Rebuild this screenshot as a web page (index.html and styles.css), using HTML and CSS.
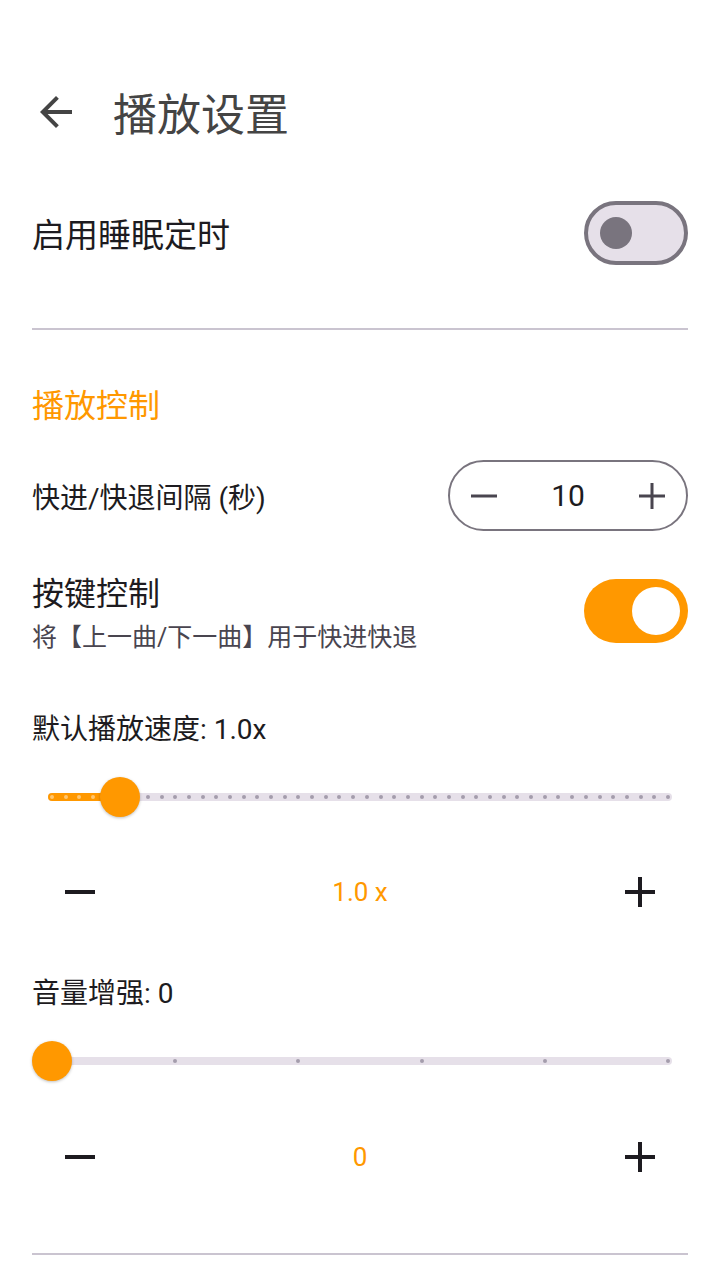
FILE: index.html
```html
<!DOCTYPE html>
<html lang="zh-CN">
<head>
    <meta charset="UTF-8">
    <meta name="viewport" content="width=device-width, initial-scale=1.0">
    <title>播放设置</title>
    <link rel="stylesheet" href="styles.css">
</head>
<body>
    <div class="page">
        <div class="header">
            <svg class="back" viewBox="0 0 24 24"><path d="M20 11H7.83l5.59-5.59L12 4l-8 8 8 8 1.41-1.41L7.83 13H20v-2z"/></svg>
            <h1>播放设置</h1>
        </div>

        <div class="row sleep-row">
            <span class="row-title sleep-title">启用睡眠定时</span>
            <div class="switch"><div class="knob"></div></div>
        </div>

        <div class="divider first"></div>

        <div class="section-title">播放控制</div>

        <div class="row step-row">
            <span class="row-label">快进/快退间隔 (秒)</span>
            <div class="stepper">
                <svg class="step-icon" viewBox="0 0 32 32"><path d="M3 16h26"/></svg>
                <span class="step-value">10</span>
                <svg class="step-icon" viewBox="0 0 32 32"><path d="M3 16h26M16 3v26"/></svg>
            </div>
        </div>

        <div class="row key-row">
            <div class="key-text">
                <div class="row-title">按键控制</div>
                <div class="row-sub">将【上一曲/下一曲】用于快进快退</div>
            </div>
            <div class="switch on"><div class="knob"></div></div>
        </div>

        <div class="slider-label speed-label">默认播放速度: 1.0x</div>
        <div class="slider" data-steps="45" data-value="5">
            <div class="track"><div class="active"></div></div>
            <div class="ticks"></div>
            <div class="thumb"></div>
        </div>
        <div class="adjust">
            <svg class="adj-icon" viewBox="0 0 30 30"><path d="M0 15h30"/></svg>
            <span class="adj-value">1.0 x</span>
            <svg class="adj-icon" viewBox="0 0 30 30"><path d="M0 15h30M15 0v30"/></svg>
        </div>

        <div class="slider-label volume-label">音量增强: 0</div>
        <div class="slider" data-steps="5" data-value="0">
            <div class="track"><div class="active"></div></div>
            <div class="ticks"></div>
            <div class="thumb"></div>
        </div>
        <div class="adjust second">
            <svg class="adj-icon" viewBox="0 0 30 30"><path d="M0 15h30"/></svg>
            <span class="adj-value">0</span>
            <svg class="adj-icon" viewBox="0 0 30 30"><path d="M0 15h30M15 0v30"/></svg>
        </div>

        <div class="divider last"></div>
    </div>

    <script>
        // Slider ticks and thumb position
        document.querySelectorAll('.slider').forEach(function(slider) {
            const steps = Number(slider.dataset.steps);
            const value = Number(slider.dataset.value);
            const ticks = slider.querySelector('.ticks');
            for (let i = 0; i <= steps; i++) {
                if (i === value) continue;
                const tick = document.createElement('span');
                tick.className = i < value ? 'tick lit' : 'tick';
                tick.style.left = (i / steps * 100) + '%';
                ticks.appendChild(tick);
            }
            const pct = value / steps * 100;
            slider.querySelector('.active').style.width = 'calc(' + pct + '% + 4px)';
            slider.querySelector('.thumb').style.left = pct + '%';
        });
    </script>
</body>
</html>
```

FILE: styles.css
```css
body {
    margin: 0;
    background: #ffffff;
    font-family: Roboto, "Noto Sans CJK SC", sans-serif;
    color: #1d1b20;
}
.page {
    width: 720px;
    padding-bottom: 24px;
}
.header {
    display: flex;
    align-items: center;
    height: 78px;
    margin-top: 73px;
    padding-left: 32px;
}
.back {
    width: 48px;
    height: 48px;
    fill: #444444;
}
.header h1 {
    margin: 0 0 0 33px;
    font-size: 44px;
    font-weight: 400;
    color: #444444;
}
.row {
    display: flex;
    justify-content: space-between;
    align-items: center;
    padding: 0 32px;
}
.row-title {
    font-size: 32px;
    line-height: 40px;
}
.sleep-row {
    margin-top: 50px;
    height: 64px;
}
.sleep-title {
    font-size: 33px;
    padding-top: 5px;
}
.switch {
    box-sizing: border-box;
    width: 104px;
    height: 64px;
    border-radius: 32px;
    border: 4px solid #79747e;
    background: #e6e0e9;
    display: flex;
    align-items: center;
    padding-left: 12px;
    flex-shrink: 0;
}
.switch .knob {
    width: 32px;
    height: 32px;
    border-radius: 50%;
    background: #79747e;
}
.switch.on {
    border: none;
    background: #ff9800;
    padding-left: 48px;
}
.switch.on .knob {
    width: 48px;
    height: 48px;
    background: #ffffff;
}
.divider {
    height: 2px;
    margin: 0 32px;
    background: #cac4d0;
}
.divider.first {
    margin-top: 63px;
}
.divider.last {
    margin-top: 66px;
}
.section-title {
    margin-top: 56px;
    padding: 0 32px;
    font-size: 32px;
    line-height: 40px;
    color: #ff9800;
}
.step-row {
    margin-top: 34px;
}
.row-label {
    font-size: 28px;
}
.stepper {
    box-sizing: border-box;
    width: 240px;
    height: 71px;
    border: 2px solid #79747e;
    border-radius: 36px;
    display: flex;
    align-items: center;
    padding: 0 18px;
}
.step-icon {
    width: 32px;
    height: 32px;
    stroke: #49454f;
    stroke-width: 3;
    fill: none;
}
.step-value {
    flex: 1;
    text-align: center;
    font-size: 30px;
}
.key-row {
    margin-top: 43px;
    align-items: flex-start;
}
.row-sub {
    margin-top: 9px;
    font-size: 25px;
    line-height: 30px;
    color: #49454f;
}
.key-row .switch {
    margin-top: 5px;
}
.slider-label {
    padding: 0 32px;
    font-size: 28px;
    line-height: 36px;
}
.speed-label {
    margin-top: 59px;
}
.volume-label {
    margin-top: 54px;
}
.slider {
    position: relative;
    height: 48px;
    margin: 25px 52px 0;
    display: flex;
    align-items: center;
}
.track {
    flex: 1;
    height: 8px;
    margin: 0 -4px;
    border-radius: 4px;
    background: #e6e0e9;
    overflow: hidden;
}
.track .active {
    height: 100%;
    background: #ff9800;
}
.ticks {
    position: absolute;
    left: 0;
    right: 0;
    top: 22px;
    height: 4px;
}
.tick {
    position: absolute;
    top: 0;
    width: 4px;
    height: 4px;
    margin-left: -2px;
    border-radius: 50%;
    background: #a49cac;
}
.tick.lit {
    background: #ffc670;
}
.thumb {
    position: absolute;
    top: 4px;
    width: 40px;
    height: 40px;
    margin-left: -20px;
    border-radius: 50%;
    background: #ff9800;
    box-shadow: 0 1px 3px rgba(0, 0, 0, 0.25);
}
.adjust {
    display: flex;
    justify-content: space-between;
    align-items: center;
    height: 60px;
    margin-top: 41px;
    padding: 0 65px;
}
.adjust.second {
    margin-top: 42px;
}
.adj-icon {
    width: 30px;
    height: 30px;
    stroke: #1d1b20;
    stroke-width: 4;
    fill: none;
}
.adj-value {
    font-size: 26px;
    color: #ff9800;
}
```
